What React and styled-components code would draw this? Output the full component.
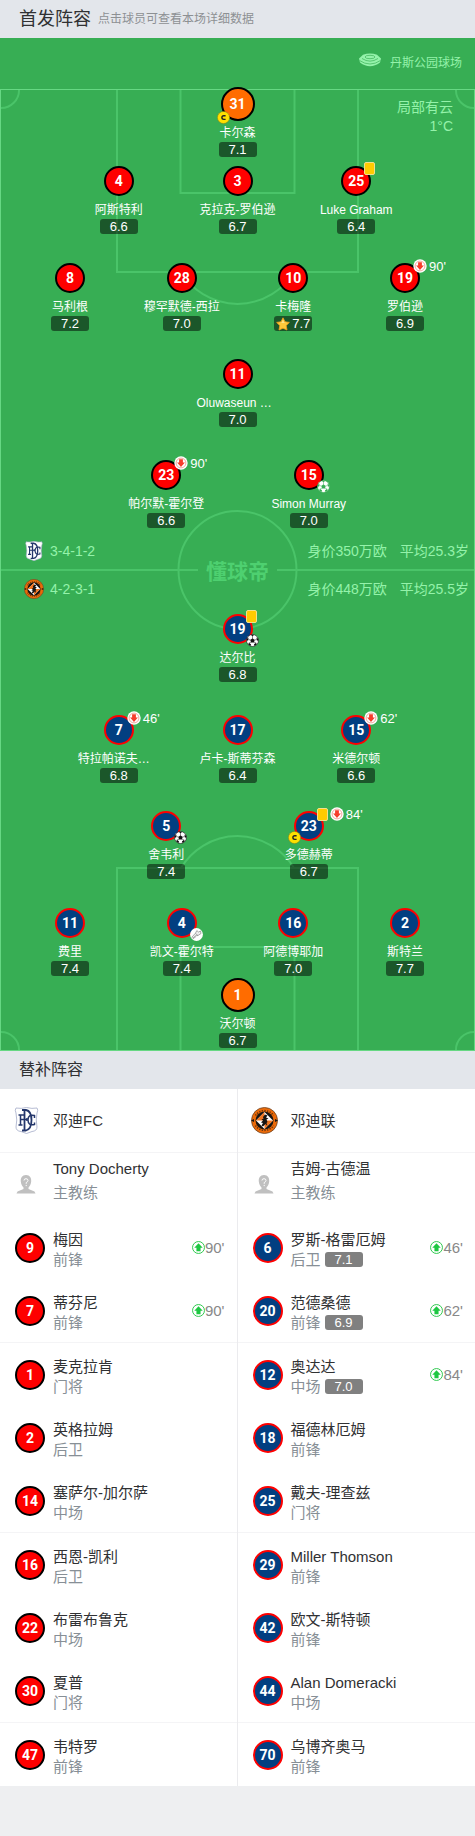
import React from "react";
import styled, { createGlobalStyle, css } from "styled-components";

const GlobalStyle = createGlobalStyle`
  * { box-sizing: border-box; }
  body {
    margin: 0;
    background: #eeeff1;
    color: #303133;
    font-family: "Liberation Sans", "Noto Sans CJK SC", sans-serif;
  }
  h2, h3, p { margin: 0; font-weight: 400; }
  ul { margin: 0; padding: 0; list-style: none; }
  a { color: inherit; text-decoration: none; }
  svg { display: block; flex: none; }
`;

const SectionBar = styled.header`
  display: flex;
  align-items: center;
  gap: 7px;
  height: 38px;
  padding: 0 19px;
  background: #e3e6eb;
`;

const SectionTitle = styled.h2`
  font-size: ${(p) => (p.$large ? 18 : 16)}px;
  line-height: 24px;
`;

const SectionHint = styled.p`
  font-size: 12px;
  line-height: 18px;
  color: #8d9093;
`;

const Field = styled.section`
  background: #37ae54;
  color: #fff;
`;

const Venue = styled.div`
  display: flex;
  justify-content: flex-end;
  gap: 9px;
  height: 49px;
  padding: 15px 13px 0 0;
  color: #94f2aa;
`;

const VenueName = styled.span`
  font-size: 12px;
  line-height: 20px;
`;

const Pitch = styled.div`
  position: relative;
  padding-bottom: 3px;
`;

const Markings = styled.svg`
  position: absolute;
  left: 0;
  top: 2px;
  width: 100%;
  height: calc(100% - 2px);
`;

const Weather = styled.div`
  position: absolute;
  top: 11px;
  right: 22px;
  color: #94f2aa;
  font-size: 14px;
  line-height: 19px;
  text-align: right;
`;

const Line = styled.div`
  position: relative;
  display: flex;
  margin-top: ${(p) => p.$before}px;
  padding: 0 ${(p) => ({ 1: 30, 2: 20, 3: 12.5, 4: 3 })[p.$count]}%;
`;

const PlayerLink = styled.a`
  flex: 1 1 0;
  min-width: 0;
  display: flex;
  flex-direction: column;
  align-items: center;
`;

const kits = {
  home: css`background: #fe0000; border-color: #000;`,
  away: css`background: #023f81; border-color: #fe0000;`,
  keeper: css`background: #ff6c00; border-color: #000;`,
};

const Shirt = styled.span`
  position: relative;
  flex: none;
  display: flex;
  align-items: center;
  justify-content: center;
  width: ${(p) => (p.$kit === "keeper" ? 34 : 30)}px;
  height: ${(p) => (p.$kit === "keeper" ? 34 : 30)}px;
  border: 2px solid;
  border-radius: 50%;
  color: #fff;
  font: 700 14px/20px Roboto, sans-serif;
  ${(p) => kits[p.$kit]}
`;

const TopEvents = styled.span`
  position: absolute;
  left: calc(50% + 8px);
  top: -6px;
  display: flex;
  align-items: center;
  gap: 2px;
  font: 400 13px/13px "Liberation Sans", sans-serif;
`;

const BottomEvent = styled.span`
  position: absolute;
  bottom: -5px;
  ${(p) => (p.$side === "left" ? "right" : "left")}: calc(50% + 8px);
`;

const PlayerName = styled.span`
  max-width: 100%;
  width: ${(p) => (p.$clipped ? "82px" : "auto")};
  margin-top: ${(p) => (p.$keeper ? 3 : 5)}px;
  font-size: 12px;
  line-height: 18px;
  white-space: nowrap;
`;

const Rating = styled.span`
  display: flex;
  align-items: center;
  justify-content: center;
  gap: 2px;
  width: 38px;
  height: 15px;
  border-radius: 3px;
  background: ${(p) => (p.$solid ? "#808080" : "rgba(0, 0, 0, 0.5)")};
  color: #fff;
  font-size: 13px;
  line-height: 15px;
`;

const Halfway = styled.div`
  position: relative;
  display: grid;
  grid-template-columns: minmax(0, 1fr) auto minmax(0, 1fr);
  align-items: center;
  padding-top: 4px;
  color: #94f2aa;
  font-size: 14px;
  line-height: 20px;
`;

const TeamSummary = styled.div`
  display: flex;
  align-items: center;
  justify-content: ${(p) => (p.$end ? "flex-end" : "flex-start")};
  gap: ${(p) => (p.$end ? 13 : 6)}px;
  height: 38px;
  padding: 0 6px 0 24px;
  white-space: nowrap;
`;

const Wordmark = styled.span`
  grid-column: 2;
  grid-row: 1 / span 2;
  color: #4ed070;
  font: 700 21px/28px "Noto Sans CJK SC", sans-serif;
  text-align: center;
`;

const Bench = styled.section`
  display: grid;
  grid-template-columns: 1fr 1fr;
  background: #fff;
`;

const BenchTeam = styled.div`
  min-width: 0;
  &:first-child { border-right: 1px solid #ebebee; }
`;

const BenchHead = styled.div`
  display: flex;
  align-items: center;
  height: 64px;
  padding-left: 13px;
  gap: 13px;
  border-bottom: 1px solid #f4f4f6;
`;

const TeamTitle = styled.h3`
  font-size: 15px;
  line-height: 20px;
`;

const Coach = styled.div`
  display: flex;
  align-items: center;
  height: 63px;
  padding-left: 16px;
  gap: 17px;
`;

const CoachText = styled.div`
  align-self: flex-start;
  padding-top: 4px;
  font-size: 15px;
  line-height: 24px;
`;

const Role = styled.p`
  color: #878f96;
`;

const SubItem = styled.li`
  &:nth-child(3n + 2) { border-bottom: 1px solid #f4f4f6; }
`;

const SubLink = styled.a`
  display: flex;
  align-items: center;
  gap: 8px;
  height: 63px;
  padding: 0 12px 0 15px;
`;

const SubText = styled.div`
  flex: 1;
  min-width: 0;
  padding-top: 4px;
  font-size: 15px;
  line-height: 20px;
  white-space: nowrap;
`;

const RoleRow = styled.div`
  display: flex;
  align-items: center;
  gap: 4px;
`;

const SubTime = styled.span`
  display: flex;
  align-items: center;
  color: #888;
  font-size: 15px;
  line-height: 20px;
`;

function PitchLines() {
  return (
    <Markings viewBox="0 0 475 962" preserveAspectRatio="none" fill="none" aria-hidden="true">
      <g stroke="#4ac469" strokeWidth="2">
        <path d="M117 0V183H358V0M180.500 0V104H294.500V0" />
        <path d="M181 183A66 66 0 0 0 294 183" />
        <path d="M117 962V779H358V962M180.500 962V858H294.500V962" />
        <path d="M181 779A66 66 0 0 1 294 779" />
        <circle cx="237.500" cy="481" r="59" />
        <path d="M0 481H198M277 481H475" />
        <path d="M19 0A18 18 0 0 1 0 19M456 0A18 18 0 0 0 475 19M19 962A18 18 0 0 0 0 943M456 962A18 18 0 0 1 475 943" />
      </g>
      <rect x="0.500" y="0.500" width="474" height="961" stroke="#66d883" />
    </Markings>
  );
}

function StadiumIcon() {
  return (
    <svg width="22" height="14" viewBox="0 0 22 14" aria-hidden="true">
      <path d="M0 5.500 4 1.800Q11-1 18 1.800L22 5.500 21 9.500Q11 17 1 9.500Z" fill="#94f2aa" />
      <path d="M.5 7.500Q11 14.500 21.500 7.500M3 5.500Q11 10.800 19 5.500" fill="none" stroke="#4fbf6a" strokeWidth=".9" />
      <ellipse cx="11" cy="4" rx="5" ry="1.700" fill="none" stroke="#4fbf6a" strokeWidth=".9" />
    </svg>
  );
}

function DundeeCrest({ size }) {
  return (
    <svg width={size} height={size} viewBox="0 0 27 27" role="img" aria-label="邓迪FC">
      <path d="M3 1Q8 2 13.500 .500 19 2 24 1 25.500 3 24 6 22.500 13 24 20 24 24 19 24.500L13.500 26.500 8 24.500Q3 24 3 20 4.500 13 3 6 1.500 3 3 1Z" fill="#fff" stroke="#a3abc8" strokeWidth=".8" />
      <g fill="none" stroke="#24366b" strokeWidth="1.500">
        <path d="M9 3H13Q18.500 4 18.500 13 18.500 22 13 23.500H9" strokeWidth="1.800" />
        <path d="M11.500 3V23.500" strokeWidth="1.800" />
        <path d="M5.500 8H12M7.500 8V18M5.500 18H9.500M7.500 12.500H14M14 11V14" />
        <path d="M21.500 11V8.500Q15 7 15 13T21.500 17.500V15.500" />
      </g>
    </svg>
  );
}

function UnitedCrest({ size }) {
  return (
    <svg width={size} height={size} viewBox="0 0 27 27" role="img" aria-label="邓迪联">
      <circle cx="13.500" cy="13.500" r="13" fill="#ec6a08" stroke="#6b4426" strokeWidth=".8" />
      <path
        d="M4.500 8.500A10.800 10.800 0 0 1 22.500 8.500M4.500 18.500A10.800 10.800 0 0 0 22.500 18.500"
        fill="none"
        stroke="#6a3410"
        strokeWidth="1.600"
        strokeDasharray="1.300 1.300"
      />
      <circle cx="13.500" cy="13.500" r="9" fill="#171412" />
      <path d="M0 13.500 3 12V15ZM27 13.500 24 12V15Z" fill="#171412" />
      <path d="M13.500 5 22 13.500 13.500 22 5 13.500Z" fill="#fff" />
      <path d="M13.500 5V13.500H5ZM13.500 22V13.500H22Z" fill="#ee7420" />
      <path d="M14 7.500 16.500 8.500 15 10.500 17.500 11.500 15.500 12.500 16.500 15 15.500 16 16.500 19 14.500 17 12 19.500 10.500 18.500 12 16 10 15.500 12 13.500 10.500 12 12.500 12 12 10Z" fill="#171412" />
    </svg>
  );
}

function CaptainIcon() {
  return (
    <svg width="13" height="13" viewBox="0 0 13 13" role="img" aria-label="队长">
      <circle cx="6.500" cy="6.500" r="6.100" fill="#ffe000" stroke="#8a8a18" strokeWidth=".6" />
      <path d="M8.600 4.800H6.700Q4.900 4.800 4.900 6.600T6.700 8.400H8.600" fill="none" stroke="#222" strokeWidth="1.400" />
    </svg>
  );
}

function CardIcon() {
  return (
    <svg width="11" height="13" viewBox="0 0 11 13" role="img" aria-label="黄牌">
      <rect x=".5" y=".5" width="10" height="12" rx="1.500" fill="#ffcb00" stroke="#f3df8d" />
    </svg>
  );
}

function SubOffIcon() {
  return (
    <svg width="14" height="14" viewBox="0 0 14 14" role="img" aria-label="换下">
      <circle cx="7" cy="7" r="6.700" fill="#fff" />
      <circle cx="7" cy="7" r="4.900" fill="none" stroke="#ef8f84" strokeWidth=".8" />
      <path d="M5.100 3.200H8.900V6.500H10.900L7 11 3.100 6.500H5.100Z" fill="#f63c2b" />
    </svg>
  );
}

function SubOnIcon() {
  return (
    <svg width="13" height="13" viewBox="0 0 12 12" role="img" aria-label="换上">
      <circle cx="6" cy="6" r="5.500" fill="#fff" stroke="#2cc74c" strokeWidth=".9" />
      <path d="M4.100 9.400H7.900V6.200H9.900L6 2 2.100 6.200H4.100Z" fill="#1ec742" />
    </svg>
  );
}

function BallIcon({ color }) {
  return (
    <svg width="13" height="13" viewBox="0 0 13 13" role="img" aria-label="进球">
      <circle cx="6.500" cy="6.500" r="6" fill="#fff" stroke={color} strokeWidth=".6" />
      <path
        d="M6.500 4.300 8.700 5.900 7.900 8.400H5.100L4.300 5.900ZM4.700.8H8.300L6.500 2.200ZM.6 5 2.500 3.400 2.300 5.800.8 7.200ZM12.400 5 10.500 3.400 10.700 5.800 12.200 7.200ZM2.300 10.500 2.800 8.700 5 10.200 4.600 12.100ZM10.700 10.500 10.200 8.700 8 10.200 8.400 12.100Z"
        fill={color}
      />
      <path d="M6.500 2V4.500M2.300 5.800H4.500M10.700 5.800H8.500M3 9 5.300 8M10 9 7.700 8" stroke={color} strokeWidth=".5" />
    </svg>
  );
}

function BootIcon() {
  return (
    <svg width="13" height="13" viewBox="0 0 13 13" role="img" aria-label="助攻">
      <circle cx="6.500" cy="6.500" r="6.400" fill="#fff" />
      <path d="M1.800 9.200 5.500 5.200 6.800 2.600 8.500 4 10.500 3 11 5.500 8 7.500 5.500 7.800 2.800 10.200ZM5.500 5.500 8 7.500M3 10.800 6 8.500" fill="#eee" stroke="#888" strokeWidth=".7" />
    </svg>
  );
}

function StarIcon() {
  return (
    <svg width="14" height="14" viewBox="0 0 14 14" role="img" aria-label="最佳">
      <path d="M7 .8 9 4.800 13.400 5.400 10.200 8.500 11 13 7 11.200 3 13 3.800 8.500.6 5.400 5 4.800Z" fill="#ffc93a" stroke="#f59e1b" strokeWidth=".8" strokeLinejoin="round" />
      <path d="M7 2.500 8.200 5.600 11 6H3L5.800 5.600Z" fill="#ffe58a" />
    </svg>
  );
}

function AvatarIcon() {
  return (
    <svg width="20" height="19" viewBox="0 0 20 19" aria-hidden="true">
      <path d="M10 0C14 0 15.500 3 15.200 6.500 15 9.500 13.500 11.500 12.500 12.500V14L18.500 16.500 19.500 18.500H.5L1.500 16.500 7.500 14V12.500C6.500 11.500 5 9.500 4.800 6.500 4.500 3 6 0 10 0Z" fill="#c0c0c0" />
      <path d="M8 5.500Q8 3.700 10 3.700T12 5.500Q12 6.700 10.200 7.600V8.800M10.200 9.900V11.100" fill="none" stroke="#fff" strokeWidth="1" />
    </svg>
  );
}

const homeLines = [
  { before: 0, players: [{ no: 31, name: "卡尔森", rating: "7.1", keeper: true, captain: true }] },
  {
    before: 9,
    players: [
      { no: 4, name: "阿斯特利", rating: "6.6" },
      { no: 3, name: "克拉克-罗伯逊", rating: "6.7" },
      { no: 25, name: "Luke Graham", rating: "6.4", card: true },
    ],
  },
  {
    before: 29,
    players: [
      { no: 8, name: "马利根", rating: "7.2" },
      { no: 28, name: "穆罕默德-西拉", rating: "7.0" },
      { no: 10, name: "卡梅隆", rating: "7.7", star: true },
      { no: 19, name: "罗伯逊", rating: "6.9", off: "90'" },
    ],
  },
  { before: 28, players: [{ no: 11, name: "Oluwaseun …", rating: "7.0", clipped: true }] },
  {
    before: 33,
    players: [
      { no: 23, name: "帕尔默-霍尔登", rating: "6.6", off: "90'" },
      { no: 15, name: "Simon Murray", rating: "7.0", event: "penalty" },
    ],
  },
];

const awayLines = [
  { before: 6, players: [{ no: 19, name: "达尔比", rating: "6.8", card: true, event: "goal" }] },
  {
    before: 33,
    players: [
      { no: 7, name: "特拉帕诺夫…", rating: "6.8", off: "46'", clipped: true },
      { no: 17, name: "卢卡-斯蒂芬森", rating: "6.4" },
      { no: 15, name: "米德尔顿", rating: "6.6", off: "62'" },
    ],
  },
  {
    before: 28,
    players: [
      { no: 5, name: "舍韦利", rating: "7.4", event: "goal" },
      { no: 23, name: "多德赫蒂", rating: "6.7", card: true, off: "84'", captain: true },
    ],
  },
  {
    before: 29,
    players: [
      { no: 11, name: "费里", rating: "7.4" },
      { no: 4, name: "凯文-霍尔特", rating: "7.4", event: "assist" },
      { no: 16, name: "阿德博耶加", rating: "7.0" },
      { no: 2, name: "斯特兰", rating: "7.7" },
    ],
  },
  { before: 2, players: [{ no: 1, name: "沃尔顿", rating: "6.7", keeper: true }] },
];

const teams = [
  {
    side: "home",
    name: "邓迪FC",
    Crest: DundeeCrest,
    coach: "Tony Docherty",
    subs: [
      [9, "梅因", "前锋", "90'"],
      [7, "蒂芬尼", "前锋", "90'"],
      [1, "麦克拉肯", "门将"],
      [2, "英格拉姆", "后卫"],
      [14, "塞萨尔-加尔萨", "中场"],
      [16, "西恩-凯利", "后卫"],
      [22, "布雷布鲁克", "中场"],
      [30, "夏普", "门将"],
      [47, "韦特罗", "前锋"],
    ],
  },
  {
    side: "away",
    name: "邓迪联",
    Crest: UnitedCrest,
    coach: "吉姆-古德温",
    subs: [
      [6, "罗斯-格雷厄姆", "后卫", "46'", "7.1"],
      [20, "范德桑德", "前锋", "62'", "6.9"],
      [12, "奥达达", "中场", "84'", "7.0"],
      [18, "福德林厄姆", "前锋"],
      [25, "戴夫-理查兹", "门将"],
      [29, "Miller Thomson", "前锋"],
      [42, "欧文-斯特顿", "前锋"],
      [44, "Alan Domeracki", "中场"],
      [70, "乌博齐奥马", "前锋"],
    ],
  },
];

const eventIcons = {
  goal: <BallIcon color="#111" />,
  penalty: <BallIcon color="#37ae54" />,
  assist: <BootIcon />,
};

function Player({ side, player }) {
  const { no, name, rating, keeper, captain, card, off, event, star, clipped } = player;
  return (
    <PlayerLink href={`#${side}-${no}`}>
      <Shirt $kit={keeper ? "keeper" : side}>
        {no}
        {(card || off) && (
          <TopEvents>
            {card && <CardIcon />}
            {off && <SubOffIcon />}
            {off}
          </TopEvents>
        )}
        {captain && <BottomEvent $side="left"><CaptainIcon /></BottomEvent>}
        {event && <BottomEvent $side="right">{eventIcons[event]}</BottomEvent>}
      </Shirt>
      <PlayerName $keeper={keeper} $clipped={clipped}>{name}</PlayerName>
      <Rating>
        {star && <StarIcon />}
        {rating}
      </Rating>
    </PlayerLink>
  );
}

function Lineup({ side, lines }) {
  return lines.map(({ before, players }) => (
    <Line key={players[0].no} $before={before} $count={players.length}>
      {players.map((p) => (
        <Player key={p.no} side={side} player={p} />
      ))}
    </Line>
  ));
}

export default function App() {
  return (
    <main>
      <GlobalStyle />
      <SectionBar>
        <SectionTitle $large>首发阵容</SectionTitle>
        <SectionHint>点击球员可查看本场详细数据</SectionHint>
      </SectionBar>

      <Field>
        <Venue>
          <StadiumIcon />
          <VenueName>丹斯公园球场</VenueName>
        </Venue>
        <Pitch>
          <PitchLines />
          <Weather>
            <p>局部有云</p>
            <p>1°C</p>
          </Weather>
          <Lineup side="home" lines={homeLines} />
          <Halfway>
            <TeamSummary>
              <DundeeCrest size={20} />
              <span>3-4-1-2</span>
            </TeamSummary>
            <Wordmark>懂球帝</Wordmark>
            <TeamSummary $end>
              <span>身价350万欧</span>
              <span>平均25.3岁</span>
            </TeamSummary>
            <TeamSummary>
              <UnitedCrest size={20} />
              <span>4-2-3-1</span>
            </TeamSummary>
            <TeamSummary $end>
              <span>身价448万欧</span>
              <span>平均25.5岁</span>
            </TeamSummary>
          </Halfway>
          <Lineup side="away" lines={awayLines} />
        </Pitch>
      </Field>

      <SectionBar>
        <SectionTitle>替补阵容</SectionTitle>
      </SectionBar>
      <Bench>
        {teams.map(({ side, name, Crest, coach, subs }) => (
          <BenchTeam key={side}>
            <BenchHead>
              <Crest size={27} />
              <TeamTitle>{name}</TeamTitle>
            </BenchHead>
            <Coach>
              <AvatarIcon />
              <CoachText>
                <p>{coach}</p>
                <Role>主教练</Role>
              </CoachText>
            </Coach>
            <ul>
              {subs.map(([no, subName, role, on, rating]) => (
                <SubItem key={no}>
                  <SubLink href={`#${side}-${no}`}>
                    <Shirt $kit={side}>{no}</Shirt>
                    <SubText>
                      <p>{subName}</p>
                      <RoleRow>
                        <Role>{role}</Role>
                        {rating && <Rating $solid>{rating}</Rating>}
                      </RoleRow>
                    </SubText>
                    {on && (
                      <SubTime>
                        <SubOnIcon />
                        {on}
                      </SubTime>
                    )}
                  </SubLink>
                </SubItem>
              ))}
            </ul>
          </BenchTeam>
        ))}
      </Bench>
    </main>
  );
}
